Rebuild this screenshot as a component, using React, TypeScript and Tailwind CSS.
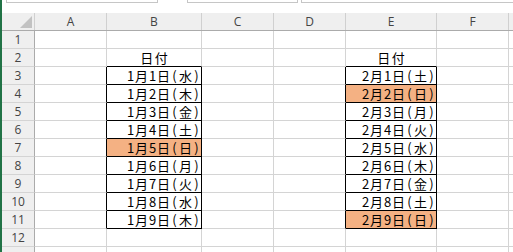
const cols = [
  { key: "A", w: "w-[72px]" },
  { key: "B", w: "w-[95px]" },
  { key: "C", w: "w-[72px]" },
  { key: "D", w: "w-[72px]" },
  { key: "E", w: "w-[91px]" },
  { key: "F", w: "w-[72px]" },
]

const jan = ["1月1日(水)", "1月2日(木)", "1月3日(金)", "1月4日(土)", "1月5日(日)", "1月6日(月)", "1月7日(火)", "1月8日(水)", "1月9日(木)"]
const feb = ["2月1日(土)", "2月2日(日)", "2月3日(月)", "2月4日(火)", "2月5日(水)", "2月6日(木)", "2月7日(金)", "2月8日(土)", "2月9日(日)"]
const orange = ["B7", "E4", "E11"]

const boxCols = ["B", "E"]

function cellText(col: string, row: number) {
  if (row === 2 && boxCols.includes(col)) return "日付"
  if (row >= 3 && row <= 11) {
    if (col === "B") return jan[row - 3]
    if (col === "E") return feb[row - 3]
  }
  return ""
}

// fixed-pitch gothic look: half-width for ascii, full-width for kanji
function Mono({ text }: { text: string }) {
  return (
    <span className="flex text-[13px] leading-none text-black">
      {text.split("").map((ch, i) => (
        <span
          key={i}
          className={`inline-block text-center ${/[\x00-\x7f]/.test(ch) ? "w-[7.3px]" : "w-[14.6px]"}`}
        >
          {ch}
        </span>
      ))}
    </span>
  )
}

function Cell({ col, idx, row }: { col: { key: string; w: string }; idx: number; row: number }) {
  const inBox = row >= 3 && row <= 11
  const next = cols[idx + 1]?.key
  const rightBlack = inBox && (boxCols.includes(col.key) || (next !== undefined && boxCols.includes(next)))
  const bottomBlack = boxCols.includes(col.key) && row >= 2 && row <= 11
  const text = cellText(col.key, row)
  const fill = orange.includes(col.key + row)
  return (
    <div
      className={`${col.w} shrink-0 h-full border-r border-b flex items-center ${
        row === 2 ? "justify-center" : "justify-end pr-[1px]"
      } ${rightBlack ? "border-r-black" : "border-r-[#d4d4d4]"} ${
        bottomBlack ? "border-b-black" : "border-b-[#d4d4d4]"
      } ${fill ? "bg-[#f4b183]" : "bg-white"}`}
    >
      {text && <Mono text={text} />}
    </div>
  )
}

export default function App() {
  const rows = Array.from({ length: 13 }, (_, i) => i + 1)
  return (
    <div
      className="flex h-screen w-full overflow-hidden bg-white"
      style={{ fontFamily: '"Noto Sans CJK JP", "Noto Sans", sans-serif' }}
    >
      <div className="w-[2px] shrink-0 bg-[#217346]" />
      <div className="flex flex-1 flex-col min-w-0">
        {/* formula bar bottom edge */}
        <div className="flex h-[13px] shrink-0 items-start">
          <div className="w-[4px] shrink-0" />
          <div className="h-[3px] w-[152px] shrink-0 border-x border-b border-[#c6c6c6] bg-white" />
          <div className="w-[29px] shrink-0" />
          <div className="h-[3px] w-[111px] shrink-0 border-x border-b border-[#c6c6c6] bg-white" />
          <div className="w-[3px] shrink-0" />
          <div className="h-[3px] flex-1 border-l border-b border-[#c6c6c6] bg-white" />
        </div>

        {/* column headers */}
        <div className="flex h-[18px] shrink-0 border-b border-[#ababab] bg-[#efefef]">
          <div className="relative w-[33px] shrink-0 border-r border-[#d0d0d0]">
            <svg className="absolute right-[2px] bottom-[2px]" width="12" height="12" viewBox="0 0 12 12">
              <polygon points="12,0 12,12 0,12" fill="#c2c2c2" />
            </svg>
          </div>
          {cols.map((c) => (
            <div
              key={c.key}
              className={`${c.w} shrink-0 border-r border-[#d0d0d0] flex items-center justify-center text-[12px] leading-none text-[#444]`}
              style={{ fontFamily: '"Open Sans", sans-serif' }}
            >
              {c.key}
            </div>
          ))}
          <div className="flex-1" />
        </div>

        {rows.map((r) => (
          <div key={r} className="flex h-[18px] shrink-0">
            <div
              className="w-[33px] shrink-0 border-r border-b border-r-[#ababab] border-b-[#d4d4d4] bg-[#efefef] flex items-center justify-center text-[12px] leading-none text-[#444]"
              style={{ fontFamily: '"Open Sans", sans-serif' }}
            >
              {r < 13 ? r : ""}
            </div>
            {cols.map((c, i) => (
              <Cell key={c.key} col={c} idx={i} row={r} />
            ))}
            <div className="flex-1 border-b border-[#d4d4d4]" />
          </div>
        ))}
      </div>
    </div>
  )
}
